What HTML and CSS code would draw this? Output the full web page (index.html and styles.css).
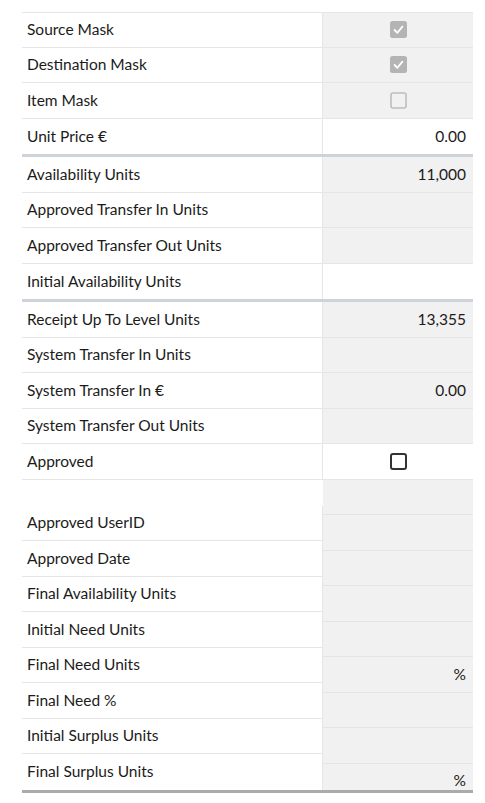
FILE: index.html
```html
<!DOCTYPE html>
<html lang="en">
<head>
<meta charset="utf-8">
<title>Form</title>
<link rel="stylesheet" href="styles.css">
</head>
<body>
<div class="form">
  <div class="row first">
    <div class="label">Source Mask</div>
    <div class="value center"><svg class="cb" viewBox="0 0 17 17"><rect x="0" y="0" width="17" height="17" rx="2.5" fill="#b4b4b4"/><path d="M4.6 9 L7.4 11.8 L12.4 5.6" fill="none" stroke="#fff" stroke-width="1.8" stroke-linecap="round" stroke-linejoin="round"/></svg></div>
  </div>
  <div class="row">
    <div class="label">Destination Mask</div>
    <div class="value center"><svg class="cb" viewBox="0 0 17 17"><rect x="0" y="0" width="17" height="17" rx="2.5" fill="#b4b4b4"/><path d="M4.6 9 L7.4 11.8 L12.4 5.6" fill="none" stroke="#fff" stroke-width="1.8" stroke-linecap="round" stroke-linejoin="round"/></svg></div>
  </div>
  <div class="row">
    <div class="label">Item Mask</div>
    <div class="value center"><svg class="cb" viewBox="0 0 17 17"><rect x="1" y="1" width="15" height="15" rx="2" fill="none" stroke="#bdbdbd" stroke-width="1.6"/></svg></div>
  </div>
  <div class="row sep">
    <div class="label">Unit Price €</div>
    <div class="value white">0.00</div>
  </div>

  <div class="row">
    <div class="label">Availability Units</div>
    <div class="value">11,000</div>
  </div>
  <div class="row">
    <div class="label">Approved Transfer In Units</div>
    <div class="value"></div>
  </div>
  <div class="row">
    <div class="label">Approved Transfer Out Units</div>
    <div class="value"></div>
  </div>
  <div class="row sep">
    <div class="label">Initial Availability Units</div>
    <div class="value white"></div>
  </div>

  <div class="row">
    <div class="label">Receipt Up To Level Units</div>
    <div class="value">13,355</div>
  </div>
  <div class="row">
    <div class="label">System Transfer In Units</div>
    <div class="value"></div>
  </div>
  <div class="row">
    <div class="label">System Transfer In €</div>
    <div class="value">0.00</div>
  </div>
  <div class="row">
    <div class="label">System Transfer Out Units</div>
    <div class="value"></div>
  </div>
  <div class="row">
    <div class="label">Approved</div>
    <div class="value white center"><svg class="cb" viewBox="0 0 17 17"><rect x="1" y="1" width="15" height="15" rx="2" fill="#fff" stroke="#333" stroke-width="2"/></svg></div>
  </div>

  <div class="split">
    <div class="labels">
      <div class="spacer"></div>
      <div class="lcell">Approved UserID</div>
      <div class="lcell">Approved Date</div>
      <div class="lcell">Final Availability Units</div>
      <div class="lcell">Initial Need Units</div>
      <div class="lcell">Final Need Units</div>
      <div class="lcell">Final Need %</div>
      <div class="lcell">Initial Surplus Units</div>
      <div class="lcell last">Final Surplus Units</div>
    </div>
    <div class="values">
      <div class="vcell"></div>
      <div class="vcell"></div>
      <div class="vcell"></div>
      <div class="vcell"></div>
      <div class="vcell"></div>
      <div class="vcell">%</div>
      <div class="vcell"></div>
      <div class="vcell"></div>
      <div class="vcell">%</div>
    </div>
  </div>
</div>
</body>
</html>
```
FILE: styles.css
```css
html, body {
  margin: 0;
  padding: 0;
  background: #fff;
}
body {
  font-family: Lato, "Open Sans", "Liberation Sans", sans-serif;
  font-size: 15.5px;
  color: #1c1b1a;
}
.form {
  margin: 12px 0 0 22px;
  width: 451px;
  border-top: 1px solid #e6e6e6;
  border-bottom: 3px solid #ababab;
}
.row {
  display: flex;
  height: 35.5px;
  box-sizing: border-box;
  border-bottom: 1px solid #e6e6e6;
}
.row.first {
  height: 34.5px;
}
.row.sep {
  height: 38.5px;
  border-bottom: 3px solid #cdd3d9;
}
.label {
  width: 301px;
  box-sizing: border-box;
  padding: 0 0 1px 5px;
  display: flex;
  align-items: center;
  border-right: 1px solid #e6e6e6;
}
.value {
  flex: 1;
  background: #f1f1f1;
  display: flex;
  align-items: center;
  justify-content: flex-end;
  padding: 0 7px 1px 0;
}
.value.white {
  background: #fff;
}
.value.center {
  justify-content: center;
  padding: 0 0 0 1px;
}
.cb {
  width: 17px;
  height: 17px;
  display: block;
}
.split {
  display: flex;
  height: 310px;
  overflow: hidden;
  align-items: flex-start;
}
.labels {
  width: 301px;
  flex: none;
}
.spacer {
  height: 26px;
}
.lcell {
  height: 35.5px;
  box-sizing: border-box;
  padding: 0 0 1px 5px;
  display: flex;
  align-items: center;
  border-bottom: 1px solid #e6e6e6;
  border-right: 1px solid #e6e6e6;
}
.lcell.last {
  border-bottom: none;
}
.values {
  flex: 1;
  background: #f1f1f1;
}
.vcell {
  height: 35.5px;
  box-sizing: border-box;
  border-bottom: 1px solid #e4e4e4;
  display: flex;
  align-items: center;
  justify-content: flex-end;
  padding: 0 7px 1px 0;
}
```
